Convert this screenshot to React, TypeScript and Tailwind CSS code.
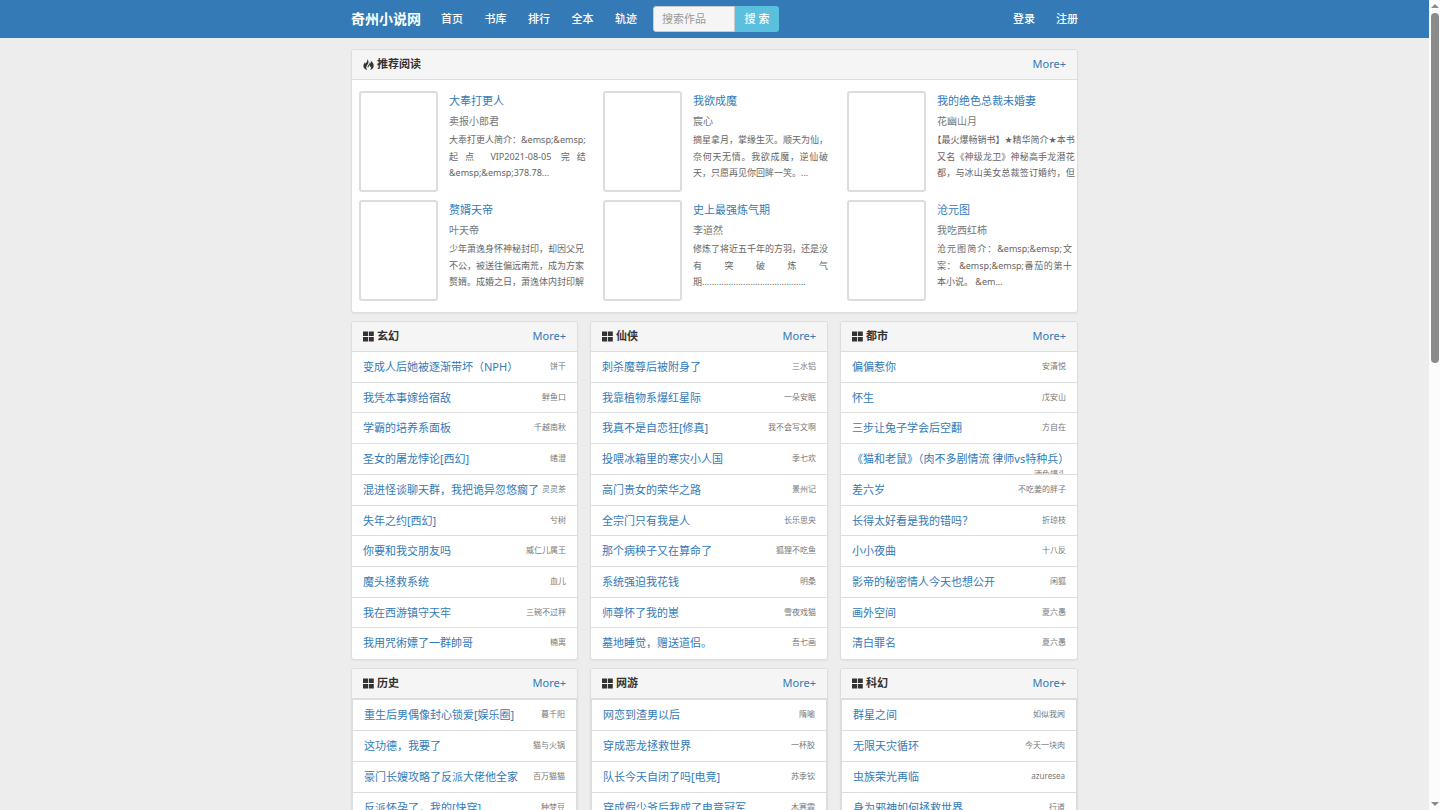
type Line = { text: string; last?: boolean };
type Book = { title: string; author: string; lines: Line[] };
type Category = { name: string; items: [string, string][] };

const books: Book[] = [
  {
    title: "大奉打更人",
    author: "卖报小郎君",
    lines: [
      { text: "大奉打更人简介：&emsp;&emsp;" },
      { text: "起点 VIP2021-08-05 完结" },
      { text: "&emsp;&emsp;378.78...", last: true },
    ],
  },
  {
    title: "我欲成魔",
    author: "宸心",
    lines: [
      { text: "摘星拿月，掌缘生灭。顺天为仙，" },
      { text: "奈何天无情。我欲成魔，逆仙破" },
      { text: "天，只愿再见你回眸一笑。...", last: true },
    ],
  },
  {
    title: "我的绝色总裁未婚妻",
    author: "花幽山月",
    lines: [
      { text: "【最火爆畅销书】★精华简介★本书" },
      { text: "又名《神级龙卫》神秘高手龙潜花" },
      { text: "都，与冰山美女总裁签订婚约，但" },
    ],
  },
  {
    title: "赘婿天帝",
    author: "叶天帝",
    lines: [
      { text: "少年萧逸身怀神秘封印，却因父兄" },
      { text: "不公，被送往偏远南荒，成为方家" },
      { text: "赘婿。成婚之日，萧逸体内封印解" },
    ],
  },
  {
    title: "史上最强炼气期",
    author: "李道然",
    lines: [
      { text: "修炼了将近五千年的方羽，还是没" },
      { text: "有突破炼气" },
      { text: "期...........................................", last: true },
    ],
  },
  {
    title: "沧元图",
    author: "我吃西红柿",
    lines: [
      { text: "沧元图简介：&emsp;&emsp;文" },
      { text: "案： &emsp;&emsp;番茄的第十" },
      { text: "本小说。 &em...", last: true },
    ],
  },
];

const fullLists: Category[] = [
  {
    name: "玄幻",
    items: [
      ["变成人后她被逐渐带坏（NPH）", "饼干"],
      ["我凭本事嫁给宿敌", "鲜鱼口"],
      ["学霸的培养系面板", "千越南秋"],
      ["圣女的屠龙悖论[西幻]", "绪澄"],
      ["混进怪谈聊天群，我把诡异忽悠瘸了", "灵灵茶"],
      ["失年之约[西幻]", "兮树"],
      ["你要和我交朋友吗", "威仁儿属王"],
      ["魔头拯救系统", "血儿"],
      ["我在西游镇守天牢", "三碗不过秤"],
      ["我用咒術嫖了一群帥哥", "楠离"],
    ],
  },
  {
    name: "仙侠",
    items: [
      ["刺杀魔尊后被附身了", "三水铝"],
      ["我靠植物系爆红星际", "一朵安眠"],
      ["我真不是自恋狂[修真]", "我不会写文啊"],
      ["投喂冰箱里的寒灾小人国", "季七欢"],
      ["高门贵女的荣华之路", "景州记"],
      ["全宗门只有我是人", "长乐思央"],
      ["那个病秧子又在算命了", "狐狸不吃鱼"],
      ["系统强迫我花钱", "明桑"],
      ["师尊怀了我的崽", "雪夜戏猫"],
      ["墓地睡觉，赠送道侣。", "吾七画"],
    ],
  },
  {
    name: "都市",
    items: [
      ["偏偏惹你", "安清悦"],
      ["怀生", "戊安山"],
      ["三步让兔子学会后空翻", "方自在"],
      ["《猫和老鼠》（肉不多剧情流 律师vs特种兵）", "酒色馒头"],
      ["差六岁", "不吃姜的胖子"],
      ["长得太好看是我的错吗？", "折琼枝"],
      ["小小夜曲", "十八反"],
      ["影帝的秘密情人今天也想公开", "闲狐"],
      ["画外空间", "夏六愚"],
      ["清白罪名", "夏六愚"],
    ],
  },
];

const partialLists: Category[] = [
  {
    name: "历史",
    items: [
      ["重生后男偶像封心锁爱[娱乐圈]", "暮千阳"],
      ["这功德，我要了", "猫与火锅"],
      ["豪门长嫂攻略了反派大佬他全家", "百万猫猫"],
      ["反派怀孕了，我的[快穿]", "种梦豆"],
    ],
  },
  {
    name: "网游",
    items: [
      ["网恋到渣男以后", "隋喻"],
      ["穿成恶龙拯救世界", "一杯胶"],
      ["队长今天自闭了吗[电竞]", "苏季钦"],
      ["穿成假少爷后我成了电竞冠军", "木寒霏"],
    ],
  },
  {
    name: "科幻",
    items: [
      ["群星之间", "如似我闻"],
      ["无限天灾循环", "今天一块肉"],
      ["虫族荣光再临", "azuresea"],
      ["身为邪神如何拯救世界", "行道"],
    ],
  },
];

function GridIcon() {
  return (
    <svg viewBox="0 0 11 11" className="h-[11px] w-[11px] fill-[#333]" aria-hidden="true">
      <path d="M0 .5h5v4.500H0zM5.800 .5h5v4.500h-5zM0 6h5v4.500H0zM5.800 6h5v4.500h-5z" />
    </svg>
  );
}

function FireIcon() {
  return (
    <svg viewBox="0 0 11 11" className="h-[11px] w-[11px] fill-[#333]" aria-hidden="true">
      <path d="M4.300 0C5.600 1.700 5.800 3 5.100 4.600 4.500 6 3.400 7 3.300 8.300c-.1 1 .3 1.700 1 2.400C2 10.400.4 9 .4 6.900.4 5.400 1.300 4.500 2 3.300c.2.5.3.9.200 1.400C3.900 3.400 4.600 2 4.300 0z" />
      <path d="M7.700 1.800C9.600 3.200 10.700 4.800 10.700 6.900c0 2.100-1.500 3.500-3.900 3.900C8 9.800 8.500 8.800 8.100 7.500c-.3.500-.5.700-.9.900.1-1-.2-1.700-.8-2.300C6.300 7.300 5.200 7.800 5.100 9 4.200 8 4.600 6.900 5.500 5.900 6.400 4.900 6.800 4.200 6.600 3.300c.6.300 1 .7 1.200 1.300.3-.9.3-1.800-.1-2.800z" />
    </svg>
  );
}

function PanelHead({ name, fire = false }: { name: string; fire?: boolean }) {
  return (
    <div className="flex h-[30px] items-center justify-between border-b border-[#ddd] bg-[#f5f5f5] px-[11px] text-[11px]">
      <h2 className="flex items-center gap-[3px] font-bold text-[#333]">
        {fire ? <FireIcon /> : <GridIcon />}
        {name}
      </h2>
      <a href="#more" className="text-[#337ab7]">More+</a>
    </div>
  );
}

function ListPanel({ category, full }: { category: Category; full: boolean }) {
  return (
    <section className="overflow-hidden rounded-[3px] border border-[#ddd] bg-white shadow-xs">
      <PanelHead name={category.name} />
      <ul className={full ? "grid h-[307px] grid-rows-10" : "grid auto-rows-[31px] border-x border-t border-[#ddd]"}>
        {category.items.map(([title, author]) => (
          <li
            key={title}
            className="flex min-h-0 flex-wrap content-start items-start overflow-hidden border-b border-[#ddd] px-[11px] pt-[7px] whitespace-nowrap last:border-b-0"
          >
            <a href="#book" className="shrink-0 text-[11px] leading-[16px] text-[#337ab7]">{title}</a>
            <span className="ml-auto text-[8px] leading-[13px] text-[#777]">{author}</span>
          </li>
        ))}
      </ul>
    </section>
  );
}

function BookCard({ book }: { book: Book }) {
  return (
    <article className="flex gap-[11px]">
      <a
        href="#book"
        aria-label={book.title}
        className="h-[101px] w-[79px] shrink-0 rounded-[3px] border-2 border-[#ddd] bg-white"
      />
      <div className="min-w-0 flex-1">
        <h3 className="pt-px text-[11px] leading-[18px]">
          <a href="#book" className="text-[#337ab7]">{book.title}</a>
        </h3>
        <p className="pt-[2px] text-[10px] leading-[18px] text-[#777]">{book.author}</p>
        <p className="grid h-[52px] grid-rows-3 pt-[2px] font-['Noto_Sans','DejaVu_Sans','Noto_Sans_CJK_SC',sans-serif] text-[9px] leading-[16px] whitespace-nowrap text-[#666]">
          {book.lines.map((line) => (
            <span
              key={line.text}
              className={line.last ? "block" : "block text-justify [text-align-last:justify] [text-spacing-trim:trim-start]"}
            >
              {line.text}
            </span>
          ))}
        </p>
      </div>
    </article>
  );
}

export default function App() {
  return (
    <div
      lang="zh-CN"
      className="flex h-screen overflow-hidden bg-[#ededed] font-['Noto_Sans','Noto_Sans_CJK_SC',sans-serif]"
    >
      <div className="min-w-0 flex-1 overflow-hidden">
        <header className="h-[38px] border-b border-[#337ab7] bg-[#337ab7] text-white">
          <nav className="mx-auto flex h-full max-w-[727px] items-center text-[11px] font-medium">
            <a href="#home" className="text-[14px] font-bold">奇州小说网</a>
            <div className="ml-[20px] flex w-[196px] justify-between pt-[2px]">
              <a href="#index">首页</a>
              <a href="#library">书库</a>
              <a href="#rank">排行</a>
              <a href="#finished">全本</a>
              <a href="#history">轨迹</a>
            </div>
            <form className="ml-[16px] flex h-[26px]" onSubmit={(e) => e.preventDefault()}>
              <input
                type="text"
                aria-label="搜索作品"
                placeholder="搜索作品"
                className="w-[82px] rounded-l-[3px] border border-[#ccc] bg-[#f5f5f5] px-2 pt-px text-[11px] font-normal text-[#555] placeholder:text-[#999]"
              />
              <button type="submit" className="w-[44px] rounded-r-[3px] bg-[#5bc0de] pt-px text-[11px] font-medium">
                搜 索
              </button>
            </form>
            <div className="ml-auto flex gap-[21px] pt-[2px]">
              <a href="#login">登录</a>
              <a href="#register">注册</a>
            </div>
          </nav>
        </header>

        <main className="mx-auto flex max-w-[727px] flex-col gap-2 pt-[11px]">
          <section className="overflow-hidden rounded-[3px] border border-[#ddd] bg-white shadow-xs">
            <PanelHead name="推荐阅读" fire />
            <div className="grid grid-cols-3 gap-x-[19px] gap-y-2 pt-[11px] pr-[5px] pb-[11px] pl-[7px]">
              {books.map((book) => (
                <BookCard key={book.title} book={book} />
              ))}
            </div>
          </section>
          <div className="grid grid-cols-[227fr_238fr_238fr] gap-[12px]">
            {fullLists.map((c) => (
              <ListPanel key={c.name} category={c} full />
            ))}
          </div>
          <div className="grid grid-cols-[227fr_238fr_238fr] gap-[12px]">
            {partialLists.map((c) => (
              <ListPanel key={c.name} category={c} full={false} />
            ))}
          </div>
        </main>
      </div>

      <div className="flex w-[11px] shrink-0 flex-col items-center justify-between bg-[#fcfcfc] py-1" aria-hidden="true">
        <div className="flex flex-col items-center gap-[5px]">
          <svg viewBox="0 0 8 4" className="h-1 w-2 fill-[#8b8b8b]"><path d="M4 0l4 4H0z" /></svg>
          <div className="h-[350px] w-2 rounded-full bg-[#8b8b8b]" />
        </div>
        <svg viewBox="0 0 8 4" className="h-1 w-2 fill-[#8b8b8b]"><path d="M4 4L0 0h8z" /></svg>
      </div>
    </div>
  );
}
